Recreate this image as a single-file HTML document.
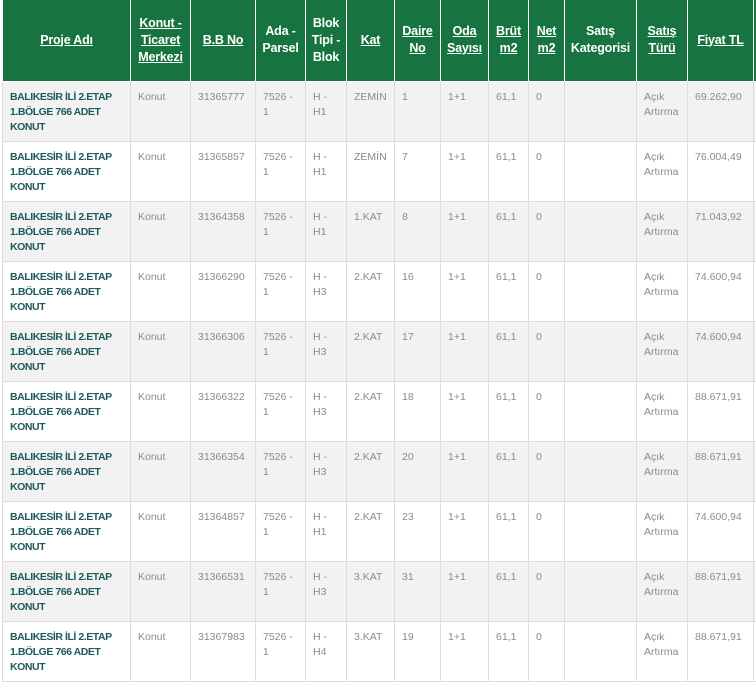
<!DOCTYPE html>
<html><head><meta charset="utf-8"><style>
body{margin:0;background:#fff;width:756px;height:689px;overflow:hidden;font-family:"Liberation Sans",sans-serif;}
table{position:absolute;left:2px;top:-1px;border-collapse:collapse;table-layout:fixed;width:770px;}
th{background:#17733f;color:#fff;font-size:12.5px;font-weight:bold;line-height:17px;border:1px solid #fff;border-top:0;height:82px;padding:0 1px;text-align:center;letter-spacing:-0.2px;}
th u{text-decoration:underline;}
td{font-size:10.5px;color:#8a8a8a;vertical-align:top;padding:8px 7px 0 7px;line-height:15px;height:51px;border:1px solid #dcdcdc;}
td:first-child{color:#1d5a5a;font-weight:bold;letter-spacing:-0.45px;}
tr:nth-child(odd) td{background:#f2f2f2;}
tr:nth-child(even) td{background:#fff;}
</style></head><body>
<table>
<colgroup><col style="width:128px"><col style="width:60px"><col style="width:65px"><col style="width:50px"><col style="width:41px"><col style="width:48px"><col style="width:46px"><col style="width:48px"><col style="width:40px"><col style="width:36px"><col style="width:72px"><col style="width:51px"><col style="width:66px"><col style="width:19px"></colgroup>
<thead><tr><th><u>Proje Adı</u></th><th><u>Konut - Ticaret Merkezi</u></th><th><u>B.B No</u></th><th>Ada - Parsel</th><th>Blok Tipi - Blok</th><th><u>Kat</u></th><th><u>Daire No</u></th><th><u>Oda Sayısı</u></th><th><u>Brüt m2</u></th><th><u>Net m2</u></th><th>Satış Kategorisi</th><th><u>Satış Türü</u></th><th><u>Fiyat TL</u></th><th></th></tr></thead>
<tbody>
<tr><td>BALIKESİR İLİ 2.ETAP 1.BÖLGE 766 ADET KONUT</td><td>Konut</td><td>31365777</td><td>7526 - 1</td><td>H - H1</td><td>ZEMİN</td><td>1</td><td>1+1</td><td>61,1</td><td>0</td><td></td><td>Açık Artırma</td><td>69.262,90</td><td></td></tr>
<tr><td>BALIKESİR İLİ 2.ETAP 1.BÖLGE 766 ADET KONUT</td><td>Konut</td><td>31365857</td><td>7526 - 1</td><td>H - H1</td><td>ZEMİN</td><td>7</td><td>1+1</td><td>61,1</td><td>0</td><td></td><td>Açık Artırma</td><td>76.004,49</td><td></td></tr>
<tr><td>BALIKESİR İLİ 2.ETAP 1.BÖLGE 766 ADET KONUT</td><td>Konut</td><td>31364358</td><td>7526 - 1</td><td>H - H1</td><td>1.KAT</td><td>8</td><td>1+1</td><td>61,1</td><td>0</td><td></td><td>Açık Artırma</td><td>71.043,92</td><td></td></tr>
<tr><td>BALIKESİR İLİ 2.ETAP 1.BÖLGE 766 ADET KONUT</td><td>Konut</td><td>31366290</td><td>7526 - 1</td><td>H - H3</td><td>2.KAT</td><td>16</td><td>1+1</td><td>61,1</td><td>0</td><td></td><td>Açık Artırma</td><td>74.600,94</td><td></td></tr>
<tr><td>BALIKESİR İLİ 2.ETAP 1.BÖLGE 766 ADET KONUT</td><td>Konut</td><td>31366306</td><td>7526 - 1</td><td>H - H3</td><td>2.KAT</td><td>17</td><td>1+1</td><td>61,1</td><td>0</td><td></td><td>Açık Artırma</td><td>74.600,94</td><td></td></tr>
<tr><td>BALIKESİR İLİ 2.ETAP 1.BÖLGE 766 ADET KONUT</td><td>Konut</td><td>31366322</td><td>7526 - 1</td><td>H - H3</td><td>2.KAT</td><td>18</td><td>1+1</td><td>61,1</td><td>0</td><td></td><td>Açık Artırma</td><td>88.671,91</td><td></td></tr>
<tr><td>BALIKESİR İLİ 2.ETAP 1.BÖLGE 766 ADET KONUT</td><td>Konut</td><td>31366354</td><td>7526 - 1</td><td>H - H3</td><td>2.KAT</td><td>20</td><td>1+1</td><td>61,1</td><td>0</td><td></td><td>Açık Artırma</td><td>88.671,91</td><td></td></tr>
<tr><td>BALIKESİR İLİ 2.ETAP 1.BÖLGE 766 ADET KONUT</td><td>Konut</td><td>31364857</td><td>7526 - 1</td><td>H - H1</td><td>2.KAT</td><td>23</td><td>1+1</td><td>61,1</td><td>0</td><td></td><td>Açık Artırma</td><td>74.600,94</td><td></td></tr>
<tr><td>BALIKESİR İLİ 2.ETAP 1.BÖLGE 766 ADET KONUT</td><td>Konut</td><td>31366531</td><td>7526 - 1</td><td>H - H3</td><td>3.KAT</td><td>31</td><td>1+1</td><td>61,1</td><td>0</td><td></td><td>Açık Artırma</td><td>88.671,91</td><td></td></tr>
<tr><td>BALIKESİR İLİ 2.ETAP 1.BÖLGE 766 ADET KONUT</td><td>Konut</td><td>31367983</td><td>7526 - 1</td><td>H - H4</td><td>3.KAT</td><td>19</td><td>1+1</td><td>61,1</td><td>0</td><td></td><td>Açık Artırma</td><td>88.671,91</td><td></td></tr>
</tbody></table>
</body></html>
